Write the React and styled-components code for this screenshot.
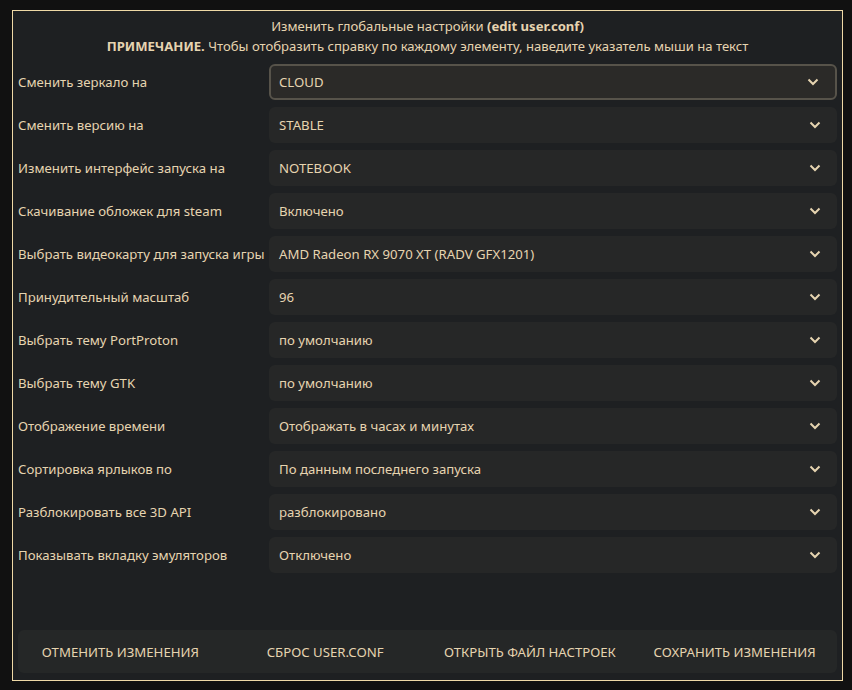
import React from "react";
import styled, { createGlobalStyle } from "styled-components";

const Global = createGlobalStyle`
  html, body { margin: 0; padding: 0; background: #111111; }
  body { font-family: "Noto Sans", "Open Sans", sans-serif; }
`;

const Page = styled.div`
  width: 852px;
  height: 690px;
  box-sizing: border-box;
  padding: 10px 9px 9px 12px;
  background: #111111;
`;

const Frame = styled.div`
  box-sizing: border-box;
  height: 100%;
  border: 1px solid #efd9a6;
  background: #1e2022;
  display: flex;
  flex-direction: column;
  padding: 0 5px 7px 5px;
  color: #e6d4b0;
`;

const Header = styled.div`
  text-align: center;
  font-size: 13.1px;
  line-height: 20px;
  padding: 5px 0 8px;
`;

const Grid = styled.div`
  display: grid;
  grid-template-columns: 251px 1fr;
  row-gap: 7px;
  align-items: center;
`;

const Label = styled.div`
  font-size: 13.2px;
  white-space: nowrap;
`;

const Select = styled.div`
  box-sizing: border-box;
  height: 36px;
  display: flex;
  align-items: center;
  justify-content: space-between;
  border-radius: 6px;
  font-size: 13.2px;
  padding: 0 16px 0 ${(p) => (p.$focused ? 8 : 10)}px;
  background: ${(p) => (p.$focused ? "#2b2a28" : "#262727")};
  border: ${(p) => (p.$focused ? "2px solid #57534a" : "none")};
`;

const Chevron = () => (
  <svg width="12" height="8" viewBox="0 0 12 8">
    <path d="M1.5 1.5 L6 6 L10.5 1.5" fill="none" stroke="#e6d4b0" strokeWidth="2" />
  </svg>
);

const Spacer = styled.div`
  flex: 1;
`;

const Footer = styled.div`
  height: 43px;
  border-radius: 6px;
  background: #252727;
  display: grid;
  grid-template-columns: repeat(4, 1fr);
  align-items: center;
`;

const FooterButton = styled.div`
  text-align: center;
  font-size: 13.2px;
  text-transform: uppercase;
`;

const rows = [
  ["Сменить зеркало на", "CLOUD", true],
  ["Сменить версию на", "STABLE"],
  ["Изменить интерфейс запуска на", "NOTEBOOK"],
  ["Скачивание обложек для steam", "Включено"],
  ["Выбрать видеокарту для запуска игры", "AMD Radeon RX 9070 XT (RADV GFX1201)"],
  ["Принудительный масштаб", "96"],
  ["Выбрать тему PortProton", "по умолчанию"],
  ["Выбрать тему GTK", "по умолчанию"],
  ["Отображение времени", "Отображать в часах и минутах"],
  ["Сортировка ярлыков по", "По данным последнего запуска"],
  ["Разблокировать все 3D API", "разблокировано"],
  ["Показывать вкладку эмуляторов", "Отключено"],
];

const buttons = [
  "Отменить изменения",
  "Сброс user.conf",
  "Открыть файл настроек",
  "Сохранить изменения",
];

export default function App() {
  return (
    <>
      <Global />
      <Page>
        <Frame>
          <Header>
            <div>
              Изменить глобальные настройки <b>(edit user.conf)</b>
            </div>
            <div>
              <b>ПРИМЕЧАНИЕ.</b> Чтобы отобразить справку по каждому элементу, наведите указатель мыши на текст
            </div>
          </Header>
          <Grid>
            {rows.map(([label, value, focused]) => (
              <React.Fragment key={label}>
                <Label>{label}</Label>
                <Select $focused={focused}>
                  <span>{value}</span>
                  <Chevron />
                </Select>
              </React.Fragment>
            ))}
          </Grid>
          <Spacer />
          <Footer>
            {buttons.map((b) => (
              <FooterButton key={b}>{b}</FooterButton>
            ))}
          </Footer>
        </Frame>
      </Page>
    </>
  );
}
